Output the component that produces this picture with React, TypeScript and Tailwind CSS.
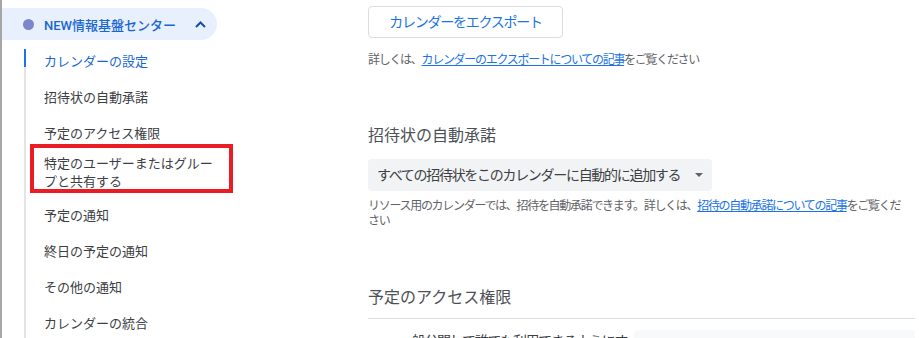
const navItems = [
  "招待状の自動承諾",
  "予定のアクセス権限",
];

const navItemsAfter = [
  "予定の通知",
  "終日の予定の通知",
  "その他の通知",
  "カレンダーの統合",
];

export default function App() {
  return (
    <div className="flex h-[338px] w-[919px] overflow-hidden bg-white font-['Roboto','Noto_Sans_CJK_JP',sans-serif]">
      <div className="w-[2px] shrink-0 bg-[#a6a6a6]" />

      <aside className="w-[254px] shrink-0 pt-2 flex flex-col">
        <div className="flex h-9 w-[215px] items-center rounded-r-full bg-[#e8f0fe] pl-[21px] pr-[11px]">
          <span className="h-[11px] w-[11px] shrink-0 rounded-full bg-[#7986cb]" />
          <span className="ml-[10px] mt-[3px] text-[13px] font-medium leading-[18px] text-[#1967d2]">
            NEW情報基盤センター
          </span>
          <svg
            className="ml-auto"
            width="11"
            height="7"
            viewBox="0 0 11 7"
            fill="none"
            stroke="#174ea6"
            strokeWidth="2"
          >
            <path d="M1 6l4.5-4.5L10 6" />
          </svg>
        </div>

        <div className="flex flex-1">
          <div className="ml-[22px] flex w-[2px] shrink-0 flex-col">
            <div className="h-[9px]" />
            <div className="h-[18px] bg-[#1a73e8]" />
            <div className="flex-1 bg-[#e3e3e8]" />
          </div>

          <ul className="flex flex-col text-[13px] leading-[18px] text-[#3c4043]">
            <li className="flex h-9 items-center pl-[18px] pt-[8px] text-[#1967d2]">
              カレンダーの設定
            </li>
            {navItems.map((label) => (
              <li key={label} className="flex h-9 items-center pl-[18px] pt-[8px]">
                {label}
              </li>
            ))}
            <li className="relative pb-[3px] pl-[18px] pt-[7px]">
              <div className="w-[175px]">特定のユーザーまたはグループと共有する</div>
              <div className="absolute left-[4px] top-[-4px] h-[49px] w-[203px] border-[4px] border-[#ea1c24]" />
            </li>
            {navItemsAfter.map((label) => (
              <li key={label} className="flex h-9 items-center pl-[18px] pt-[8px]">
                {label}
              </li>
            ))}
          </ul>
        </div>
      </aside>

      <main className="w-[547px] shrink-0 pl-[112px] pt-[6px] box-content">
        <button
          type="button"
          className="h-8 w-[195px] rounded-[4px] border border-[#dadce0] text-[14px] tracking-[-1.25px] text-[#1a73e8]"
        >
          カレンダーをエクスポート
        </button>
        <p className="mt-[14px] text-[12px] leading-4 tracking-[-1.3px] text-[#5f6368]">
          詳しくは、
          <span className="text-[#1a73e8] underline">
            カレンダーのエクスポートについての記事
          </span>
          をご覧ください
        </p>

        <h2 className="mt-[56px] text-[16px] leading-6 text-[#4d5156]">
          招待状の自動承諾
        </h2>
        <div className="mt-[11px] flex h-8 w-[344px] items-center justify-between rounded-[4px] bg-[#f1f3f4] pl-[9px] pr-[9px]">
          <span className="text-[14px] tracking-[-1.3px] text-[#3c4043]">
            すべての招待状をこのカレンダーに自動的に追加する
          </span>
          <span className="h-0 w-0 border-x-[4px] border-t-[4px] border-x-transparent border-t-[#5f6368]" />
        </div>
        <p className="mt-2 max-w-[540px] text-[12px] leading-[15px] tracking-[-1.3px] text-[#5f6368]">
          リソース用のカレンダーでは、招待を自動承諾できます。詳しくは、
          <span className="text-[#1a73e8] underline">
            招待の自動承諾についての記事
          </span>
          をご覧ください
        </p>

        <h2 className="mt-[57px] text-[16px] leading-6 text-[#4d5156]">
          予定のアクセス権限
        </h2>
        <div className="mt-2 h-px bg-[#dadce0]" />
        <div className="mt-[10px] flex">
          <span className="pl-[31px] pt-[2px] text-[14px] leading-5 tracking-[-1.3px] text-[#3c4043]">
            一般公開して誰でも利用できるようにす
          </span>
          <div className="ml-auto mt-px h-10 w-[281px] rounded-[4px] bg-[#f8f9fa]" />
        </div>
      </main>
    </div>
  );
}
